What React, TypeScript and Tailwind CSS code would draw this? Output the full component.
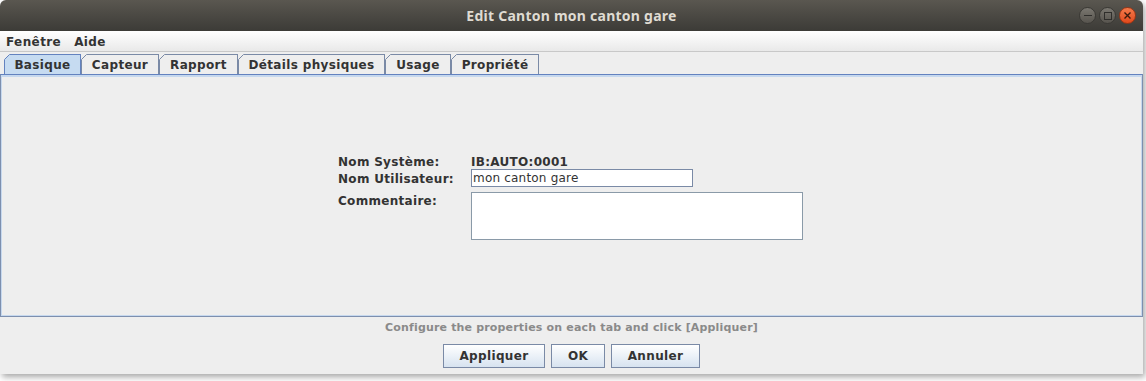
import React from "react";

const tabs = ["Basique", "Capteur", "Rapport", "Détails physiques", "Usage", "Propriété"];
const tabWidths = [77, 78, 79, 147, 66, 88];

function Tab({ label, w, selected }: { label: string; w: number; selected: boolean }) {
  return (
    <div
      className={
        "relative h-[20px] flex items-center justify-center border-t border-l border-r " +
        (selected ? "bg-[#c6dbf1] border-[#6382bf]" : "bg-[#eeeeee] border-[#7a8aa6]")
      }
      style={{ width: w }}
    >
      <svg className="absolute -left-px -top-px" width="6" height="6" viewBox="0 0 6 6">
        <path d="M0 0 H6 V0 L0 6 Z" fill="#eeeeee" />
        <path d="M0.5 5.5 L5.5 0.5" stroke={selected ? "#6382bf" : "#7a8aa6"} strokeWidth="1" />
      </svg>
      <span className="text-[12px] font-bold text-[#333333] leading-none pt-[1px] tracking-[0.35px]">{label}</span>
    </div>
  );
}

function Btn({ label, w }: { label: string; w: number }) {
  return (
    <div
      className="h-[24px] flex items-center justify-center border border-[#7a8aa6] bg-gradient-to-b from-[#ffffff] to-[#d7e3f0] text-[12px] font-bold text-[#333333] tracking-[0.35px]"
      style={{ width: w }}
    >
      {label}
    </div>
  );
}

export default function App() {
  return (
    <div
      className="w-[1146px] h-[381px] bg-[#ffffff] overflow-hidden"
      style={{ fontFamily: '"DejaVu Sans", sans-serif' }}
    >
      <div className="w-[1143px] h-[374px] rounded-t-[6px] overflow-hidden flex flex-col bg-[#eeeeee] shadow-[2px_3px_6px_rgba(0,0,0,0.35)]">
        {/* title bar */}
        <div className="relative h-[31px] flex items-center justify-center bg-gradient-to-b from-[#5a5750] to-[#3c3b37]">
          <span
            className="text-[14px] font-bold text-[#dfdbd2] tracking-[0.25px]"
            style={{ fontFamily: '"Noto Sans", "DejaVu Sans", sans-serif' }}
          >
            Edit Canton mon canton gare
          </span>
          <div className="absolute right-[7px] top-[7px] flex gap-[3px]">
            <div className="w-[17px] h-[17px] rounded-full bg-gradient-to-b from-[#7a7770] to-[#57544e] border border-[#3a3935] flex items-center justify-center">
              <div className="w-[8px] h-[1.5px] bg-[#2f2e2b]" />
            </div>
            <div className="w-[17px] h-[17px] rounded-full bg-gradient-to-b from-[#7a7770] to-[#57544e] border border-[#3a3935] flex items-center justify-center">
              <div className="w-[8px] h-[8px] border-[1.5px] border-[#2f2e2b]" />
            </div>
            <div className="w-[17px] h-[17px] rounded-full bg-gradient-to-b from-[#f47a4a] to-[#e0481a] border border-[#9c3514] flex items-center justify-center">
              <svg width="9" height="9" viewBox="0 0 9 9">
                <path d="M1.5 1.5 L7.5 7.5 M7.5 1.5 L1.5 7.5" stroke="#3b1a0c" strokeWidth="1.4" />
              </svg>
            </div>
          </div>
        </div>
        {/* menu bar */}
        <div className="h-[21px] flex items-center gap-[13px] pl-[6px] pt-[1px] bg-gradient-to-b from-[#ffffff] to-[#e9e9e9] border-b border-[#c8c8c8] text-[12px] font-bold text-[#333333] tracking-[0.4px]">
          <span>Fenêtre</span>
          <span>Aide</span>
        </div>
        {/* tabs */}
        <div className="flex pl-[4px] mt-[2px]">
          {tabs.map((t, i) => (
            <Tab key={t} label={t} w={tabWidths[i]} selected={i === 0} />
          ))}
        </div>
        {/* content */}
        <div className="h-[243px] border border-[#7d8fae] border-t-[#6382bf] flex">
          <div className="flex-1 border-t-[2px] border-l border-r border-b border-[#c6d8ee] flex items-center justify-center">
            <div className="grid grid-cols-[133px_auto] text-[12px] text-[#333333] mt-[2px] -ml-[2px]">
              <div className="h-[15px] flex items-center font-bold tracking-[0.3px]">Nom Système:</div>
              <div className="h-[15px] flex items-center font-bold tracking-[0.3px]">IB:AUTO:0001</div>
              <div className="h-[19px] flex items-center font-bold tracking-[0.3px]">Nom Utilisateur:</div>
              <div className="h-[19px] flex items-start">
                <div className="w-[222px] h-[18px] bg-[#ffffff] border border-[#7a8aa6] flex items-center pl-[1px] tracking-[0.2px]">
                  mon canton gare
                </div>
              </div>
              <div className="font-bold pt-[7px] leading-none tracking-[0.3px]">Commentaire:</div>
              <div className="pt-[4px]">
                <div className="w-[332px] h-[48px] bg-[#ffffff] border border-[#8a9aa8]" />
              </div>
            </div>
          </div>
        </div>
        {/* footer */}
        <div className="flex-1 flex flex-col items-center">
          <div className="text-[11px] font-bold text-[#8a8a8a] mt-[4px] leading-[14px] tracking-[0.17px]">
            Configure the properties on each tab and click [Appliquer]
          </div>
          <div className="flex gap-[6px] mt-[9px]">
            <Btn label="Appliquer" w={102} />
            <Btn label="OK" w={54} />
            <Btn label="Annuler" w={89} />
          </div>
        </div>
      </div>
    </div>
  );
}
